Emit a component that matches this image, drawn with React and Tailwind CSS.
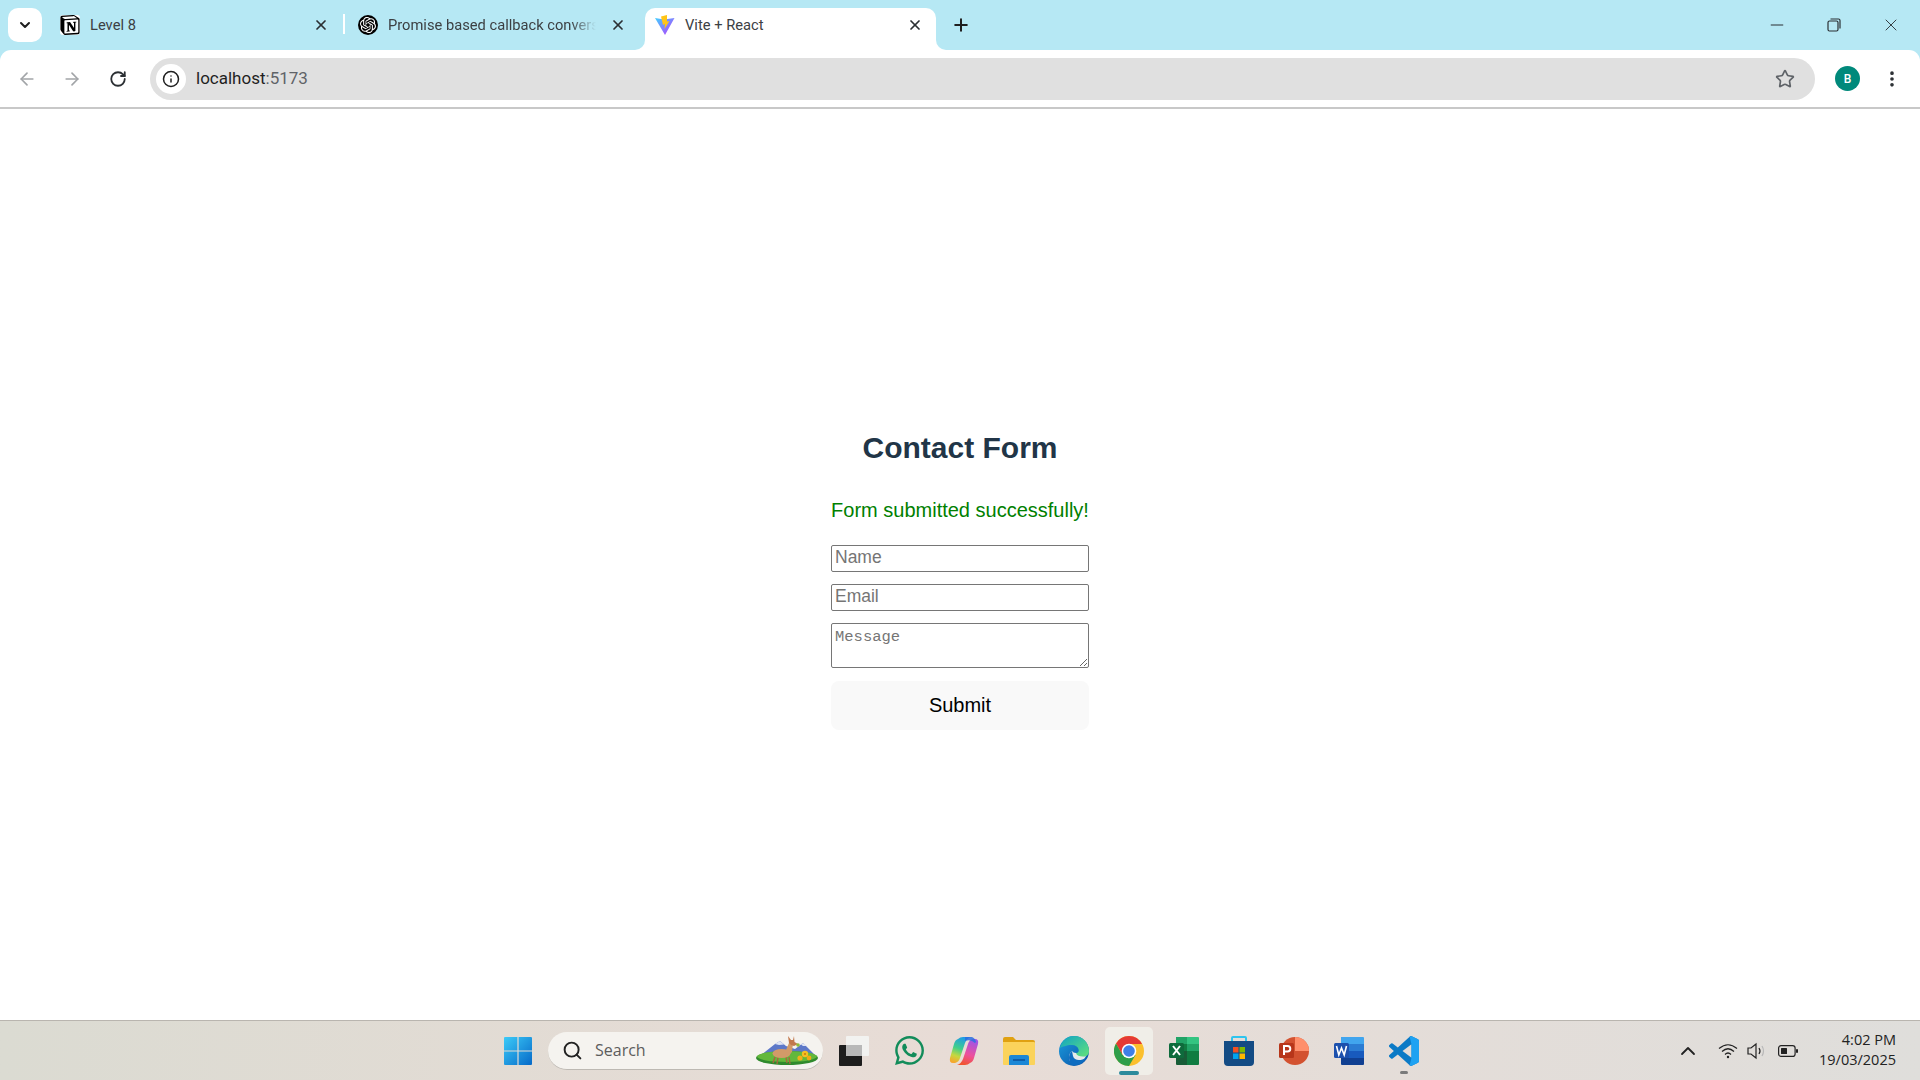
import React from 'react';
import {
  ArrowLeft,
  ArrowRight,
  ChevronDown,
  ChevronUp,
  EllipsisVertical,
  Info,
  Minus,
  Plus,
  RotateCw,
  Search,
  Star,
  X,
} from 'lucide-react';
import { SiNotion, SiOpenai } from 'react-icons/si';
import { FaWhatsapp } from 'react-icons/fa';

const STRIP = 'bg-[#b6e8f4]';

function ViteLogo() {
  return (
    <svg width="20" height="20" viewBox="0 0 20 20">
      <defs>
        <linearGradient id="vite-a" x1="0" y1="0" x2="1" y2="1">
          <stop offset="0" stopColor="#41d1ff" />
          <stop offset="1" stopColor="#bd34fe" />
        </linearGradient>
      </defs>
      <path d="M0 3 L9 4.5 L19.5 3 L10 20 Z" fill="url(#vite-a)" />
      <path d="M12 0 L6 1.5 L8 10 L10 9 L9.5 14 L14.5 6 L12 6.5 Z" fill="#ffc517" />
    </svg>
  );
}

function Tab({ icon, title, active, fade, className }) {
  return (
    <div
      className={`relative flex h-[42px] items-center rounded-t-[10px] pb-[8px] ${
        active ? 'bg-white' : ''
      } ${className}`}
    >
      {active && (
        <>
          <div className="absolute bottom-0 -left-[10px] h-[10px] w-[10px] bg-white">
            <div className={`h-full w-full rounded-br-[10px] ${STRIP}`} />
          </div>
          <div className="absolute bottom-0 -right-[10px] h-[10px] w-[10px] bg-white">
            <div className={`h-full w-full rounded-bl-[10px] ${STRIP}`} />
          </div>
        </>
      )}
      <span className="flex w-[20px] shrink-0 items-center justify-center">{icon}</span>
      <span
        className={`ml-[10px] min-w-0 flex-1 whitespace-nowrap text-[14.7px] text-[#3c4043] ${
          fade ? 'mr-[14px] mask-r-from-[88%] mask-r-to-100%' : ''
        }`}
      >
        {title}
      </span>
      <X size={16} strokeWidth={2.6} className="shrink-0 text-[#2b2f33]" />
    </div>
  );
}

function TabStrip() {
  return (
    <div className={`flex h-[50px] shrink-0 items-end ${STRIP}`}>
      <div className="mb-[8px] ml-[8px] flex h-[34px] w-[34px] items-center justify-center rounded-[10px] bg-white">
        <ChevronDown size={16} strokeWidth={3} className="text-[#1f1f1f]" />
      </div>
      <Tab
        className="ml-[18px] w-[281px] pr-[12px]"
        icon={<SiNotion size={20} className="rounded-[3px] bg-white text-black" />}
        title="Level 8"
      />
      <div className="mb-[16px] ml-[2px] h-[20px] w-[2px] bg-white" />
      <Tab
        className="ml-[13px] w-[287px] pr-[19px]"
        icon={
          <span className="flex h-[20px] w-[20px] items-center justify-center rounded-full bg-black">
            <SiOpenai size={16} className="text-white" />
          </span>
        }
        title="Promise based callback convers"
        fade
      />
      <Tab
        active
        className="w-[291px] pr-[13px] pl-[10px]"
        icon={<ViteLogo />}
        title="Vite + React"
      />
      <Plus size={20} strokeWidth={2.4} className="mb-[15px] ml-[15px] text-[#1f1f1f]" />
      <div className="mb-[10px] ml-auto flex h-[30px] items-center text-[#2a2f33]">
        <Minus size={20} strokeWidth={1.2} />
        <svg className="ml-[40px]" width="14" height="14" viewBox="0 0 14 14" fill="none" stroke="currentColor" strokeWidth="1.2">
          <rect x="1" y="3" width="10" height="10" rx="1.5" />
          <path d="M3.5 1 H11.5 A1.5 1.5 0 0 1 13 2.5 V10.5" />
        </svg>
        <X size={20} strokeWidth={1.1} className="mr-[19px] ml-[40px]" />
      </div>
    </div>
  );
}

function Toolbar() {
  return (
    <div className={`shrink-0 ${STRIP}`}>
      <div className="flex h-[57px] items-center rounded-t-[11px] bg-white">
        <ArrowLeft size={20} strokeWidth={2} className="ml-[17px] text-[#a2a5a8]" />
        <ArrowRight size={20} strokeWidth={2} className="ml-[25px] text-[#a2a5a8]" />
        <RotateCw size={18} strokeWidth={2.4} className="ml-[27px] text-[#2b2f33]" />
        <div className="ml-[23px] flex h-[42px] flex-1 items-center rounded-full bg-[#e0e0e0] pr-[20px]">
          <span className="ml-[6px] flex h-[30px] w-[30px] items-center justify-center rounded-full bg-white">
            <Info size={18} strokeWidth={2} className="text-[#1f1f1f]" />
          </span>
          <span className="ml-[10px] pt-[1px] text-[17px] text-[#1f1f1f]">
            localhost<span className="text-[#5f6368]">:5173</span>
          </span>
          <Star size={20} strokeWidth={2} className="ml-auto text-[#5f6368]" />
        </div>
        <span className="ml-[20px] flex h-[25px] w-[25px] items-center justify-center rounded-full bg-[#00897b] text-[12px] font-medium text-white">
          B
        </span>
        <EllipsisVertical size={20} strokeWidth={2.4} className="mr-[18px] ml-[22px] text-[#2b2f33]" />
      </div>
      <div className="h-[2px] bg-[#c8c8c8]" />
    </div>
  );
}

function ContactForm() {
  const field =
    'h-[27px] w-full rounded-[2px] border border-[#767676] bg-white px-[3px] pb-[2px] text-[17.5px] placeholder:text-[#757575]';
  return (
    <div className="flex flex-1 items-center justify-center bg-white font-['Liberation_Sans',sans-serif]">
      <div className="mt-[30px] flex w-[258px] flex-col">
        <h1 className="text-center text-[30px] leading-[36px] font-bold text-[#213547]">Contact Form</h1>
        <p className="mt-[32px] text-center text-[20px] leading-[24px] whitespace-nowrap text-[#008000]">
          Form submitted successfully!
        </p>
        <form className="mt-[23px] flex flex-col">
          <input className={field} placeholder="Name" />
          <input className={`${field} mt-[12px]`} placeholder="Email" />
          <textarea
            className="mt-[12px] block h-[45px] w-full resize rounded-[2px] border border-[#767676] bg-white px-[3px] py-[2px] font-['Liberation_Mono',monospace] text-[15.5px] placeholder:text-[#757575]"
            placeholder="Message"
          />
          <button
            type="button"
            className="mt-[13px] h-[49px] rounded-[8px] bg-[#f9f9f9] text-[20px] font-medium text-black"
          >
            Submit
          </button>
        </form>
      </div>
    </div>
  );
}

function WindowsLogo() {
  return (
    <svg width="30" height="30" viewBox="0 0 30 30">
      <defs>
        <linearGradient id="win-a" x1="0" y1="0" x2="1" y2="1">
          <stop offset="0" stopColor="#3ccbf8" />
          <stop offset="1" stopColor="#0669c8" />
        </linearGradient>
      </defs>
      <path d="M1 2 Q1 1 2 1 H14.4 V14.4 H1 Z M15.6 1 H28 Q29 1 29 2 V14.4 H15.6 Z M1 15.6 H14.4 V29 H2 Q1 29 1 28 Z M15.6 15.6 H29 V28 Q29 29 28 29 H15.6 Z" fill="url(#win-a)" />
    </svg>
  );
}

function DeerScene() {
  return (
    <svg width="64" height="34" viewBox="0 0 64 34">
      <path d="M6 22 L20 11 L25 8 L31 13 L40 16 L48 10 L60 22 Z" fill="#5d78c8" />
      <path d="M20 11 L25 8 L29 11.5 L24 12 Z M46 11.5 L48 10 L52 13 L48 13 Z" fill="#dfe4f3" />
      <ellipse cx="32" cy="25" rx="31" ry="7" fill="#2f8a2d" />
      <ellipse cx="32" cy="23.5" rx="30" ry="5.5" fill="#63b83c" />
      <path d="M20 24 L18 30 M23 24 L22 31 M31 24 L32 30 M34 24 L35 31" stroke="#a5683d" strokeWidth="1.4" />
      <ellipse cx="26.5" cy="20.5" rx="9" ry="4.5" fill="#d29a68" />
      <path d="M31 17 L34 10 L38 10 L37 19 L33 23 Z" fill="#d29a68" />
      <path d="M34 10 L33 3 L36 7 L38 7 L39 3 L39.5 9 L43 11 L39 13 L36 12 Z" fill="#c2794d" />
      <circle cx="43" cy="12" r="1.8" fill="#8dbb3a" />
      <circle cx="45" cy="25" r="2.6" fill="#f0b21b" />
      <circle cx="50" cy="21" r="3.2" fill="#f5bf22" />
      <circle cx="54" cy="25" r="2.4" fill="#eeaa15" />
      <circle cx="50" cy="21" r="1" fill="#c9790f" />
    </svg>
  );
}

function FilesIcon() {
  return (
    <svg width="30" height="30" viewBox="0 0 30 30">
      <rect x="7" y="0" width="23" height="20" rx="1" fill="#f2f2f0" />
      <rect x="0" y="9" width="23" height="21" rx="1" fill="#1d1d1d" />
      <rect x="7" y="9" width="16" height="11" fill="#b8b8b8" />
    </svg>
  );
}

function CopilotIcon() {
  return (
    <svg width="30" height="30" viewBox="0 0 30 30">
      <defs>
        <linearGradient id="cop-a" x1="0.6" y1="0" x2="0.3" y2="1">
          <stop offset="0" stopColor="#1f9be8" />
          <stop offset="0.45" stopColor="#3fcf8a" />
          <stop offset="0.75" stopColor="#c6d83f" />
          <stop offset="1" stopColor="#f6a72e" />
        </linearGradient>
        <linearGradient id="cop-b" x1="0.6" y1="0" x2="0.3" y2="1">
          <stop offset="0" stopColor="#f0542f" />
          <stop offset="0.4" stopColor="#ee4f9c" />
          <stop offset="1" stopColor="#9a55ea" />
        </linearGradient>
      </defs>
      <g transform="rotate(180 15 15)">
        <path d="M9 3 Q11 1 14 1 H22 Q18 2 16 7 L11 22 Q10 26 6 27 H4 Q0 27 1 22 L5 8 Q6 4 9 3 Z" fill="url(#cop-b)" />
      </g>
      <path d="M9 3 Q11 1 14 1 H22 Q18 2 16 7 L11 22 Q10 26 6 27 H4 Q0 27 1 22 L5 8 Q6 4 9 3 Z" fill="url(#cop-a)" />
      <path d="M16 1 H23 Q26 2 27 6 L26 7 Q22 3 16 5 Z" fill="#2b6fe0" opacity="0.85" />
    </svg>
  );
}

function FolderIcon() {
  return (
    <svg width="32" height="28" viewBox="0 0 32 28">
      <path d="M0 2 Q0 0 2 0 H10 L13 3 H30 Q32 3 32 5 V8 H0 Z" fill="#e0a111" />
      <path d="M0 5 H31 Q32 5 32 6 V27 Q32 28 31 28 H1 Q0 28 0 27 Z" fill="#fbd35b" />
      <path d="M6 28 V20 Q6 18 8 18 H24 Q26 18 26 20 V28 Z" fill="#1b87d6" />
      <rect x="10" y="22" width="12" height="2" fill="#0e5da8" />
    </svg>
  );
}

function EdgeIcon() {
  return (
    <svg width="30" height="30" viewBox="0 0 30 30">
      <defs>
        <linearGradient id="edge-a" x1="0" y1="0" x2="1" y2="1">
          <stop offset="0" stopColor="#0fa3c4" />
          <stop offset="1" stopColor="#64e37a" />
        </linearGradient>
        <linearGradient id="edge-b" x1="0" y1="0" x2="1" y2="1">
          <stop offset="0" stopColor="#1b9ede" />
          <stop offset="1" stopColor="#0a4fa6" />
        </linearGradient>
      </defs>
      <circle cx="15" cy="15" r="15" fill="url(#edge-b)" />
      <path d="M1 12 C3 3 10 0 15 0 C24 0 30 7 30 15 C30 20 26 21 22 21 C18 21 16 19 17 17 C22 17 20 9 13 9 C7 9 3 11 1 12 Z" fill="url(#edge-a)" />
      <path d="M17 17 C18 21 24 21 27 20 C24 27 16 29 13 27 C9 25 9 18 13 15 C14 16 15 17 17 17 Z" fill="#f2f0ec" opacity="0.95" />
      <path d="M13 15 C9 18 9 25 13 29 C18 30 24 28 27 22 C22 25 15 25 14 20 Z" fill="#0e6cc0" />
    </svg>
  );
}

function ChromeIcon() {
  return (
    <svg width="30" height="30" viewBox="0 0 30 30">
      <circle cx="15" cy="15" r="15" fill="#fbc02d" />
      <path d="M15 0 A15 15 0 0 0 2 7.5 L8.5 19 L15 8 H28 A15 15 0 0 0 15 0 Z" fill="#e53935" />
      <path d="M2 7.5 A15 15 0 0 0 15 30 L21.5 19 H8.5 Z" fill="#2e9e4a" />
      <circle cx="15" cy="15" r="7.3" fill="#fff" />
      <circle cx="15" cy="15" r="5.8" fill="#3f7fe8" />
    </svg>
  );
}

function ExcelIcon() {
  return (
    <svg width="30" height="30" viewBox="0 0 30 30">
      <path d="M7 1 H18 V8 H7 Z" fill="#21a366" />
      <path d="M18 1 H29 Q30 1 30 2 V8 H18 Z" fill="#33c481" />
      <path d="M7 8 H18 V15 H7 Z" fill="#107c41" />
      <path d="M18 8 H30 V15 H18 Z" fill="#21a366" />
      <path d="M7 15 H18 V29 H8 Q7 29 7 28 Z" fill="#185c37" />
      <path d="M18 15 H30 V28 Q30 29 29 29 H18 Z" fill="#107c41" />
      <rect x="0" y="7" width="15" height="15" rx="1.5" fill="#0e6b3c" />
      <path d="M4 10 L11 19 M11 10 L4 19" stroke="#fff" strokeWidth="2" />
    </svg>
  );
}

function StoreIcon() {
  return (
    <svg width="30" height="30" viewBox="0 0 30 30">
      <path d="M8 6 V2 Q8 1 9 1 H21 Q22 1 22 2 V6" fill="none" stroke="#2fc4ee" strokeWidth="2" />
      <path d="M0 5 H30 V26 Q30 30 26 30 H4 Q0 30 0 26 Z" fill="#134b84" />
      <rect x="9" y="11" width="5.5" height="5.5" fill="#f25022" />
      <rect x="15.5" y="11" width="5.5" height="5.5" fill="#7fba00" />
      <rect x="9" y="17.5" width="5.5" height="5.5" fill="#00a4ef" />
      <rect x="15.5" y="17.5" width="5.5" height="5.5" fill="#ffb900" />
    </svg>
  );
}

function PowerPointIcon() {
  return (
    <svg width="30" height="30" viewBox="0 0 30 30">
      <circle cx="16" cy="15" r="14" fill="#d35230" />
      <path d="M16 1 A14 14 0 0 1 30 15 H16 Z" fill="#ff8f6b" />
      <rect x="0" y="7" width="15" height="15" rx="1.5" fill="#b7361a" />
      <path d="M5 19 V10 H8.5 A2.8 2.8 0 0 1 8.5 15.6 H5" fill="none" stroke="#fff" strokeWidth="2" />
    </svg>
  );
}

function WordIcon() {
  return (
    <svg width="30" height="30" viewBox="0 0 30 30">
      <path d="M7 1 H29 Q30 1 30 2 V8 H7 Z" fill="#41a5ee" />
      <path d="M7 8 H30 V15 H7 Z" fill="#2b7cd3" />
      <path d="M7 15 H30 V22 H7 Z" fill="#185abd" />
      <path d="M7 22 H30 V28 Q30 29 29 29 H8 Q7 29 7 28 Z" fill="#103f91" />
      <rect x="0" y="7" width="15" height="15" rx="1.5" fill="#1c50ad" />
      <path d="M2.5 10 L4.8 19 L7.5 12 L10.2 19 L12.5 10" fill="none" stroke="#fff" strokeWidth="1.6" />
    </svg>
  );
}

function VscodeIcon() {
  return (
    <svg width="30" height="30" viewBox="0 0 24 24">
      <path
        d="M23.15 2.587L18.21.21a1.494 1.494 0 0 0-1.705.29l-9.46 8.63-4.12-3.128a.999.999 0 0 0-1.276.057L.327 7.261A1 1 0 0 0 .326 8.74L3.899 12 .326 15.26a1 1 0 0 0 .001 1.479L1.65 17.94a.999.999 0 0 0 1.276.057l4.12-3.128 9.46 8.63a1.492 1.492 0 0 0 1.704.29l4.942-2.377A1.5 1.5 0 0 0 24 20.06V3.939a1.5 1.5 0 0 0-.85-1.352zm-5.146 14.861L10.826 12l7.178-5.448v10.896z"
        fill="#0b7ac6"
      />
      <path
        d="M16.5.5 Q17.3-.1 18.21.21 L23.15 2.587 A1.5 1.5 0 0 1 24 3.94 V20.06 A1.5 1.5 0 0 1 23.15 21.41 L18.21 23.79 Q17.3 24.1 16.5 23.5 L18.004 17.448 V6.552 Z"
        fill="#1fa2f2"
      />
    </svg>
  );
}

function TaskbarIcon({ children, active, running }) {
  return (
    <div
      className={`relative flex h-[48px] w-[48px] items-center justify-center rounded-[5px] ${
        active ? 'bg-[#f0eee8]' : ''
      }`}
    >
      {children}
      {active && <span className="absolute bottom-[0px] h-[4px] w-[20px] rounded-full bg-[#2c8a9c]" />}
      {running && <span className="absolute bottom-[1px] h-[3px] w-[8px] rounded-full bg-[#7a7a7a]" />}
    </div>
  );
}

function Taskbar() {
  return (
    <div className="flex h-[60px] shrink-0 items-center border-t border-[#b9b5af] bg-gradient-to-r from-[#dbdbd2] via-[#e8dcd6] to-[#dfdedb] font-['Open_Sans',sans-serif]">
      <div className="ml-[503px]">
        <WindowsLogo />
      </div>
      <div className="ml-[15px] flex h-[38px] w-[275px] items-center rounded-full border-b border-[#bdb9b3] bg-[#f5f3ef]">
        <Search size={21} strokeWidth={2.2} className="ml-[14px] text-[#222222]" />
        <span className="ml-[12px] text-[16px] text-[#5d5d5d]">Search</span>
        <span className="mr-[4px] ml-auto">
          <DeerScene />
        </span>
      </div>
      <div className="ml-[7px] flex items-center gap-[7px]">
        <TaskbarIcon>
          <FilesIcon />
        </TaskbarIcon>
        <TaskbarIcon>
          <FaWhatsapp size={33} className="text-[#128c5a]" />
        </TaskbarIcon>
        <TaskbarIcon>
          <CopilotIcon />
        </TaskbarIcon>
        <TaskbarIcon>
          <FolderIcon />
        </TaskbarIcon>
        <TaskbarIcon>
          <EdgeIcon />
        </TaskbarIcon>
        <TaskbarIcon active>
          <ChromeIcon />
        </TaskbarIcon>
        <TaskbarIcon>
          <ExcelIcon />
        </TaskbarIcon>
        <TaskbarIcon>
          <StoreIcon />
        </TaskbarIcon>
        <TaskbarIcon>
          <PowerPointIcon />
        </TaskbarIcon>
        <TaskbarIcon>
          <WordIcon />
        </TaskbarIcon>
        <TaskbarIcon running>
          <VscodeIcon />
        </TaskbarIcon>
      </div>
      <div className="mr-[24px] ml-auto flex items-center text-[#222222]">
        <ChevronUp size={24} strokeWidth={1.8} />
        <svg className="ml-[18px]" width="20" height="16" viewBox="0 0 20 16" fill="none" stroke="#222" strokeWidth="1.2">
          <path d="M1 5.5 Q10 -2 19 5.5" />
          <path d="M4 8.5 Q10 3 16 8.5" />
          <path d="M7 11.5 Q10 8.5 13 11.5" />
          <circle cx="10" cy="14" r="1.2" fill="#222" stroke="none" />
        </svg>
        <svg className="ml-[9px]" width="20" height="18" viewBox="0 0 20 18" fill="none" stroke="#222" strokeWidth="1.2">
          <path d="M1 6 H4 L9 2 V16 L4 12 H1 Z" />
          <path d="M12 6 Q14 9 12 12" />
          <path d="M15 4 Q18 9 15 14" stroke="#b8b8b8" />
        </svg>
        <svg className="ml-[11px]" width="20" height="12" viewBox="0 0 20 12" fill="none">
          <rect x="0.6" y="0.6" width="16.5" height="10.8" rx="2.5" stroke="#222" strokeWidth="1.2" />
          <rect x="3" y="3" width="6" height="6" rx="0.5" fill="#222" />
          <rect x="18" y="4" width="2" height="4" rx="1" fill="#222" />
        </svg>
        <div className="ml-[21px] pb-[1px] text-right text-[14.5px] leading-[20px]">
          <div>4:02 PM</div>
          <div>19/03/2025</div>
        </div>
      </div>
    </div>
  );
}

export default function App() {
  return (
    <div className="flex h-screen w-full flex-col overflow-hidden bg-white font-['Roboto',sans-serif]">
      <TabStrip />
      <Toolbar />
      <ContactForm />
      <Taskbar />
    </div>
  );
}
